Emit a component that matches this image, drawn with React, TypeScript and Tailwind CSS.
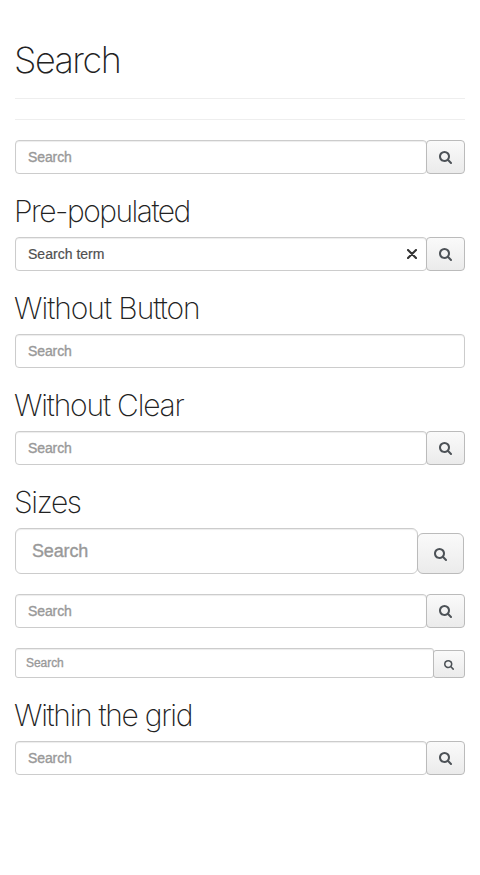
import React from 'react';

type Size = 'lg' | 'md' | 'sm';

const fields: Record<Size, string> = {
  lg: 'h-[46px] rounded-[6px] px-4 text-[18px] tracking-[-0.15px]',
  md: 'h-[34px] rounded-[4px] px-3 text-[14px] tracking-[-0.1px]',
  sm: 'h-[30px] rounded-[3px] px-2.5 text-[12px] tracking-[-0.05px]',
};

const buttons: Record<Size, string> = {
  lg: 'h-[41px] w-[47px] rounded-[6px] mr-px',
  md: 'h-[34px] w-[39px] rounded-[4px]',
  sm: 'h-[28px] w-[32px] rounded-[3px]',
};

const icons: Record<Size, string> = {
  lg: 'h-[14px] w-[13px] mt-px',
  md: 'h-[14px] w-[13px]',
  sm: 'h-[11px] w-[10px]',
};

function SearchIcon({ className }: { className: string }) {
  return (
    <svg viewBox="64 0 1664 1792" fill="currentColor" className={className}>
      <path d="M1216 832q0-185-131.5-316.5t-316.5-131.5-316.5 131.5-131.5 316.5 131.5 316.5 316.5 131.5 316.5-131.5 131.5-316.5zm512 832q0 52-38 90t-90 38q-54 0-90-38l-343-342q-179 124-399 124-143 0-273.5-55.5t-225-150-150-225-55.5-273.5 55.5-273.5 150-225 225-150 273.5-55.5 273.5 55.5 225 150 150 225 55.5 273.5q0 220-124 399l343 343q37 37 37 90z" />
    </svg>
  );
}

function Search({ size = 'md', value, button = true }: { size?: Size; value?: string; button?: boolean }) {
  return (
    <div className="mb-5 flex items-end">
      <div
        className={`flex min-w-0 flex-1 items-center justify-between border border-[#ccc] bg-white shadow-[inset_0_1px_1px_rgba(0,0,0,0.075)] ${fields[size]}`}
      >
        <span className={value ? 'tracking-[0.02px] text-[#505050] [-webkit-text-stroke:0.2px_#505050]' : 'text-[#999] [-webkit-text-stroke:0.35px_#999]'}>
          {value ?? 'Search'}
        </span>
        {value && (
          <svg viewBox="0 0 10 10" className="-mr-[3px] size-[10px] text-[#333]" stroke="currentColor" strokeWidth="2.1" strokeLinecap="round">
            <path d="M1 1l8 8M9 1l-8 8" />
          </svg>
        )}
      </div>
      {button && (
        <button
          className={`-ml-px flex shrink-0 items-center justify-center border border-[#bbb] bg-linear-to-b from-[#fafafa] to-[#ebebeb] text-[#4d5257] ${buttons[size]}`}
        >
          <SearchIcon className={icons[size]} />
        </button>
      )}
    </div>
  );
}

function Heading({ children, className }: { children: string; className: string }) {
  return (
    <h2 className={`mb-2.5 -ml-px h-[33px] whitespace-nowrap font-['Inter',sans-serif] text-[30px] leading-[35px] font-extralight text-[#222] ${className}`}>
      {children}
    </h2>
  );
}

export default function App() {
  return (
    <main className="min-h-[875px] bg-white px-[15px] pt-10 font-['Liberation_Sans',Arial,sans-serif]">
      <h1 className="-ml-px h-10 font-['Inter',sans-serif] text-[36px] leading-[40px] font-extralight tracking-[-1.5px] text-[#222]">Search</h1>
      <hr className="mt-[18px] border-[#eee]" />
      <hr className="mt-5 mb-5 border-[#eee]" />
      <Search />
      <Heading className="tracking-[-1.5px]">Pre-populated</Heading>
      <Search value="Search term" />
      <Heading className="tracking-[-1.02px]">Without Button</Heading>
      <Search button={false} />
      <Heading className="tracking-[-1.18px]">Without Clear</Heading>
      <Search />
      <Heading className="tracking-[-1.35px]">Sizes</Heading>
      <Search size="lg" />
      <Search />
      <Search size="sm" />
      <Heading className="tracking-[-1.3px]">Within the grid</Heading>
      <Search />
    </main>
  );
}
